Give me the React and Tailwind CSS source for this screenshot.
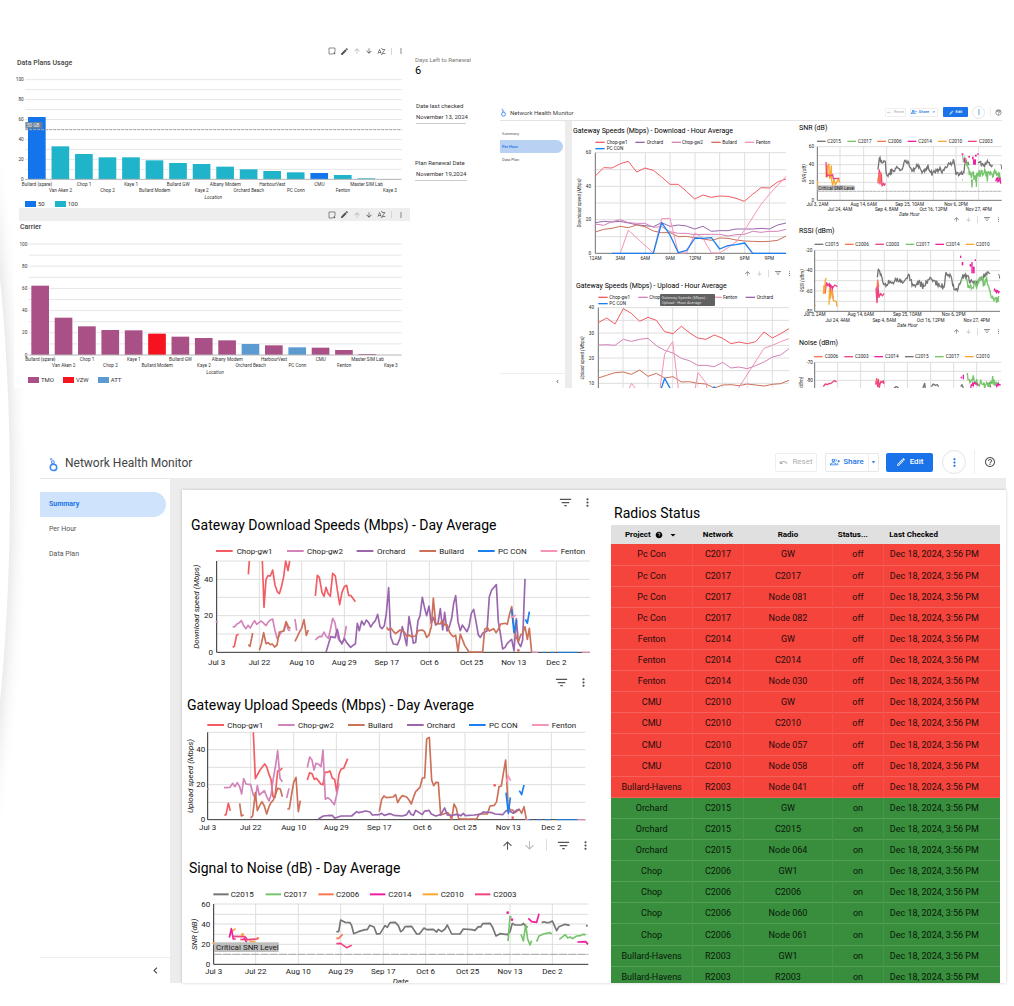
import React from "react";
import {
  MdArrowDownward,
  MdArrowDropDown,
  MdArrowUpward,
  MdChevronLeft,
  MdEdit,
  MdFilterList,
  MdHelp,
  MdHelpOutline,
  MdMoreVert,
  MdOutlineEdit,
  MdOutlineGroupAdd,
  MdSortByAlpha,
  MdUndo,
} from "react-icons/md";

const C = {
  gw1: "#f25c62",
  gw2: "#d283b9",
  orchard: "#9a66ae",
  bullard: "#cc7058",
  pc: "#1a80ef",
  fenton: "#f593b8",
  c2015: "#757575",
  c2017: "#76c46c",
  c2006: "#fa7650",
  c2014: "#ee1fa0",
  c2010: "#fba830",
  c2003: "#ee4480",
};

/* ---------- line chart primitives ---------- */

const toPoints = (pts) => pts.map((p) => p.join(",")).join(" ");

// Splits "x,y x,y | x,y x,y" into separate strokes.
function Strokes({ d, color, width = 5 }) {
  return d.split("|").map((part, i) => (
    <polyline key={i} points={part.trim()} fill="none" stroke={color} strokeWidth={width} strokeLinejoin="round" />
  ));
}

function Dots({ at, color, r = 4 }) {
  return at.map(([x, y]) => <circle key={x + "-" + y} cx={x} cy={y} r={r} fill={color} />);
}

// Hourly values: a polyline through anchors, with repeatable noise around it.
function noisy(anchors, amp, seed, step = 2) {
  let s = seed;
  const rnd = () => {
    s = (s * 16807) % 2147483647;
    return s / 2147483647 - 0.5;
  };
  rnd();
  rnd();
  const out = [];
  for (let i = 0; i < anchors.length - 1; i++) {
    const [x0, y0] = anchors[i];
    const [x1, y1] = anchors[i + 1];
    for (let x = x0; x < x1; x += step) {
      const t = (x - x0) / (x1 - x0);
      const spike = rnd() > 0.3 ? 2.4 : 1.1;
      out.push([Math.round(x), Math.round(y0 + (y1 - y0) * t + rnd() * amp * spike)]);
    }
  }
  return out;
}

function Noise({ a, amp, seed, color, width = 4 }) {
  return <polyline points={toPoints(noisy(a, amp, seed))} fill="none" stroke={color} strokeWidth={width} />;
}

function hourly(x0, step, values) {
  return values.map((v, i) => `${Math.round(x0 + i * step)},${v}`).join(" ");
}

function Plot({ box, x, y, xs, ys, yLabels, xLabels, legend, legendY, size, dash, gap, yTitle, label, children }) {
  return (
    <svg viewBox={box} className="block h-auto w-full font-[Roboto,sans-serif]" role="img" aria-label={label}>
      {ys.map((v) => (
        <line key={v} x1={x[0]} x2={x[1]} y1={v} y2={v} stroke="#dedede" strokeWidth="3" />
      ))}
      {xs.map((v) => (
        <line key={v} x1={v} x2={v} y1={y[0]} y2={y[1]} stroke="#dedede" strokeWidth="3" />
      ))}
      <path d={`M${x[0]} ${y[0]}V${y[1]}H${x[1]}`} fill="none" stroke={size > 20 ? "#333" : "#777"} strokeWidth="3" />
      {children}
      <g fill="#222" fontSize={size} dominantBaseline="central">
        {yLabels.map(([t, v]) => (
          <text key={t} x={x[0] - gap} y={v} textAnchor="end">{t}</text>
        ))}
        {xLabels.map(([t, lx, ly]) => (
          <text key={t} x={lx} y={ly} textAnchor="middle" fontStyle={t.startsWith("Date") ? "italic" : "normal"}>{t}</text>
        ))}
        {legend.map(([t, c, lx, tx, ly]) => (
          <g key={t}>
            <line x1={lx} x2={lx + dash} y1={ly || legendY} y2={ly || legendY} stroke={c} strokeWidth={size > 20 ? 6 : 4} />
            <text x={tx} y={ly || legendY}>{t}</text>
          </g>
        ))}
        <text
          transform={`translate(${yTitle[1]} ${yTitle[2]}) rotate(-90)`}
          textAnchor="middle"
          fontStyle="italic"
        >
          {yTitle[0]}
        </text>
      </g>
    </svg>
  );
}

const days = ["Jul 3", "Jul 22", "Aug 10", "Aug 29", "Sep 17", "Oct 6", "Oct 25", "Nov 13", "Dec 2"];
const hours = ["12AM", "3AM", "6AM", "9AM", "12PM", "3PM", "6PM", "9PM"];
const stamps = ["Jul 3, 2AM", "Jul 24, 4AM", "Aug 14, 6AM", "Sep 4, 8AM", "Sep 25, 10AM", "Oct 16, 12PM", "Nov 6, 2PM", "Nov 27, 4PM"];

const place = (names, xs, ly) => names.map((n, i) => [n, xs[i], ly]);
const stagger = (names, xs, a, b) => names.map((n, i) => [n, xs[i], i % 2 ? b : a]);

/* ---------- day charts ---------- */

function DownloadDay() {
  const xs = [140, 268, 395, 523, 650, 778, 905, 1031, 1159];
  return (
    <Plot
      label="Gateway download speeds by day"
      box="36 198 1269 372" x={[140, 1260]} y={[243, 517]} xs={xs} ys={[243, 298, 352, 407, 462]}
      yLabels={[["40", 298], ["20", 407], ["0", 517]]} xLabels={place(days, xs, 546)} size={24} dash={50} gap={11}
      legendY={213} yTitle={["Download speed (Mbps)", 80, 380]}
      legend={[
        ["Chop-gw1", C.gw1, 138, 200], ["Chop-gw2", C.gw2, 351, 411], ["Orchard", C.orchard, 560, 621],
        ["Bullard", C.bullard, 748, 808], ["PC CON", C.pc, 924, 984], ["Fenton", C.fenton, 1112, 1172],
      ]}
    >
      <Strokes color={C.gw1} d="235,283 238,243 | 277,243 282,382 288,298 294,287 301,288 308,270 315,315 322,335 328,341 334,322 341,290 347,243 354,272 359,243 | 436,348 442,286 448,292 456,337 462,349 468,322 474,340 481,349 488,280 496,288 502,330 509,374 516,337 523,320 530,316 536,346 543,347 556,365 | 188,502 193,499 200,465 206,463" />
      <Strokes color={C.gw2} d="137,425 143,425 | 188,441 194,440 201,432 208,428 214,422 221,437 228,446 234,436 241,444 248,430 254,422 260,433 267,428 274,423 288,437 294,427 301,420 308,417 315,452 322,477 328,466 335,455 342,452 349,428 355,450 361,452 | 375,417 380,452 | 436,480 442,474 449,469 455,470 462,456 468,468 475,475 481,450 488,415 495,428 502,470 509,483 516,488 522,478 529,438" />
      <Strokes color={C.orchard} d="468,517 482,470 495,473 502,448 509,480 516,492 523,475 530,488 542,502 549,496 556,492 562,430 568,452 575,423 582,435 589,420 596,428 602,441 609,430 616,422 623,403 630,440 636,446 643,437 649,400 656,323 662,470 670,492 682,494 690,475 697,440 703,465 710,497 717,410 724,450 730,490 737,487 744,422 750,408 757,352 764,385 770,407 777,378 784,430 790,412 797,435 804,430 811,386 818,450 824,397 831,453 838,440 845,415 851,370 857,347 864,425 871,452 877,435 891,455 897,440 904,400 911,388 918,425 925,465 931,472 938,460 951,453 958,350 965,330 979,314 985,425 991,460 998,507 1005,502 1012,490 1025,478 1032,512 1039,416 1045,488 1052,500 1058,480 1065,296" />
      <Strokes color={C.bullard} d="235,494 240,499 248,459 | 268,511 274,492 281,458 288,491 294,488 301,494 307,492 314,501 321,495 328,456 341,453 348,425 355,440 361,446 | 375,484 382,470 389,455 395,445 402,419 409,466 415,450 | 650,442 656,450 663,445 670,454 677,461 690,450 697,452 704,458 711,470 717,465 724,470 737,468 744,452 757,450 763,454 770,472 777,465 784,440 790,354 797,430 810,432 817,422 824,435 831,434 838,455 845,465 850,470 857,466 864,515 871,462 878,480 884,496 897,516 938,516 944,448 952,442 958,453 971,446 978,458 985,448 992,432 1005,430 1012,433 1018,405 1025,380 1032,440 1038,470 1045,486 1052,465 1058,460 1065,440 1072,478 1078,445 1085,517" />
      <Strokes color={C.pc} d="1025,388 1032,458 1040,420 | 1066,418 1072,430 1078,395" />
      <Strokes width={3} color={C.pc} d="1090,517 1098,517 | 1118,517 1126,517 | 1142,517 1152,517 | 1164,517 1222,517" />
      <Strokes color={C.fenton} d="1022,412 1030,410 1038,405" />
      <Strokes width={3} color={C.fenton} d="1085,517 1104,517 | 1236,517 1260,517" />
      <Dots color={C.gw1} at={[[1045, 511]]} />
    </Plot>
  );
}

function UploadDay() {
  const xs = [113, 242, 371, 499, 628, 757, 885, 1015, 1144];
  return (
    <Plot
      label="Gateway upload speeds by day"
      box="36 150 1269 339" x={[113, 1246]} y={[187, 449]} xs={xs} ys={[187, 239, 292, 344, 397]}
      yLabels={[["40", 239], ["20", 344], ["0", 449]]} xLabels={place(days, xs, 471)} size={24} dash={50} gap={7}
      legendY={165} yTitle={["Upload speed (Mbps)", 62, 318]}
      legend={[
        ["Chop-gw1", C.gw1, 112, 172], ["Chop-gw2", C.gw2, 324, 384], ["Bullard", C.bullard, 534, 594],
        ["Orchard", C.orchard, 711, 770], ["PC CON", C.pc, 897, 957], ["Fenton", C.fenton, 1086, 1145],
      ]}
    >
      <Strokes color={C.gw1} d="163,436 168,434 175,400 181,422 | 250,187 256,326 270,300 284,282 290,290 296,310 303,328 309,380 315,382 323,303 331,300 337,294 | 412,330 419,308 426,311 433,328 439,325 446,333 452,342 459,344 465,306 473,307 480,303 487,325 494,328 500,365 507,312 513,298 521,295 533,266" />
      <Strokes color={C.gw2} d="111,357 117,357 | 162,353 180,352 188,340 195,350 202,338 209,350 215,372 221,326 228,342 242,344 250,375 256,385 262,347 268,375 283,362 290,380 297,393 303,375 310,325 317,285 323,242 330,325 337,335 | 350,384 357,355 | 412,293 419,261 426,270 432,300 438,280 446,283 453,290 459,240 466,388 473,383 480,388 493,404 500,375 507,340" />
      <Strokes color={C.bullard} d="209,400 214,438 221,434 | 242,444 248,438 256,368 262,422 270,405 276,395 283,408 290,432 297,410 303,398 310,390 316,375 323,355 331,357 337,380 | 352,418 358,416 365,372 371,337 378,322 385,425 391,392 | 628,425 635,388 642,378 649,383 669,381 677,374 683,398 690,385 697,377 710,381 717,390 724,402 731,380 737,365 750,352 757,324 764,324 770,207 778,202 785,330 791,347 798,337 805,338 812,435 820,432 833,428 840,436 845,448 852,402 859,415 866,446 873,447 920,447 927,432 952,432 960,408 973,406 980,395 987,350 994,348 1000,310 1007,270 1014,405 1021,420 1028,420 1035,428 1048,418 1055,430 1062,410 1069,448" />
      <Strokes color={C.orchard} d="445,447 460,438 480,436 488,437 494,445 513,438 545,438 560,425 567,428 587,423 600,426 607,435 627,434 635,430 643,436 660,431 672,436 697,438 710,434 717,422 723,433 730,436 737,421 757,434 763,424 777,421 784,432 797,438 812,434 824,414 832,435 845,436 860,433 873,437 880,430 886,437 912,435 930,433 940,426 966,428 975,432 998,434 1008,422 1020,424 1030,430 1040,420 1048,418" />
      <Strokes color={C.pc} d="1008,368 1015,430 1021,382 | 1048,362 1055,374 1062,345" />
      <Strokes width={3} color={C.pc} d="1076,449 1084,449 | 1102,449 1112,449 | 1126,449 1140,449 | 1158,449 1222,449" />
      <Strokes color={C.fenton} d="1009,337 1014,317 1022,332" />
      <Strokes width={3} color={C.fenton} d="1066,449 1076,449 | 1222,449 1246,449" />
      <Dots color={C.gw1} at={[[974, 346], [1028, 443]]} />
    </Plot>
  );
}

function SignalDay() {
  const xs = [131, 257, 385, 512, 640, 767, 893, 1020, 1147];
  return (
    <Plot
      label="Signal to noise by day"
      box="36 165 1269 279" x={[131, 1255]} y={[207, 388]} xs={xs} ys={[207, 238, 267, 298, 328, 358]}
      yLabels={[["60", 207], ["40", 267], ["20", 328], ["0", 388]]}
      xLabels={[...place(days, xs, 409), ["Date", 692, 440]]} size={24} dash={46} gap={10}
      legendY={178} yTitle={["SNR (dB)", 74, 298]}
      legend={[
        ["C2015", C.c2015, 130, 182], ["C2017", C.c2017, 287, 341], ["C2006", C.c2006, 445, 498],
        ["C2014", C.c2014, 600, 655], ["C2010", C.c2010, 758, 812], ["C2003", C.c2003, 915, 970],
      ]}
    >
      <line x1="131" x2="1255" y1="358" y2="358" stroke="#a8a8a8" strokeWidth="3" strokeDasharray="24 4" />
      <Strokes color={C.c2015} d="499,290 506,290 512,255 525,262 540,263 545,272 551,296 565,290 585,284 592,284 599,271 612,276 620,297 630,296 645,272 652,277 660,263 676,262 685,272 692,290 698,286 705,275 725,274 740,297 748,297 762,279 770,284 790,283 800,291 805,283 815,290 825,282 832,270 845,297 870,297 880,282 905,284 915,286 925,275 932,276 938,266 960,265 967,275 978,303 990,296 1012,299 1020,290 1027,265 1035,270 1055,270 1060,265 1065,272 1073,277 | 1115,263 1122,260 1130,263 1140,262 1147,258 1160,287 1167,275 1185,268 1199,271 | 1248,271 1253,274" />
      <Strokes color={C.c2017} d="1014,318 1020,245 1025,246 | 1053,298 1060,318 1067,269 1073,312 1080,330 1085,317 | 1100,320 1107,303 1120,297 1140,293 1145,297 | 1168,313 1186,299 1193,309 1200,306 1208,311 1220,303 1232,302 1238,298 1247,299" />
      <Strokes color={C.c2006} d="499,310 506,310 518,298" />
      <Strokes color={C.c2010} d="179,304 184,290 197,281 | 214,298 219,303 | 238,319 256,320" />
      <Strokes color={C.c2014} d="178,308 184,281 190,312 197,312 | 222,308 230,322 | 1075,250 1085,260 1100,262 1107,236 | 1222,321 1247,320 1254,328" />
      <Strokes color={C.c2003} d="190,304 225,305 232,314 262,312 | 211,313 232,314 | 499,326 512,325 520,331 530,338 545,331" />
      <Dots color={C.c2014} at={[[1013, 233], [1026, 254]]} />
      <Dots color={C.c2006} at={[[263, 310]]} />
      <Dots color={C.c2010} at={[[218, 298], [131, 325]]} />
      <rect x="132" y="322" width="194" height="29" fill="#bdbdbd" />
      <text x="138" y="337" fontSize="24" fill="#222" dominantBaseline="central">Critical SNR Level</text>
    </Plot>
  );
}

/* ---------- hour charts ---------- */

function DownloadHour() {
  const xs = [316, 391, 466, 540, 615, 689, 764, 838];
  return (
    <Plot
      label="Gateway download speeds by hour"
      box="246 129 675 372" x={[316, 888]} y={[173, 475]} xs={xs} ys={[173, 224, 274, 324, 374, 425]}
      yLabels={[["60", 173], ["40", 274], ["20", 374], ["0", 475]]} xLabels={place(hours, xs, 489)} size={14} dash={28} gap={13}
      legendY={142} yTitle={["Download speed (Mbps)", 267, 324]}
      legend={[
        ["Chop-gw1", C.gw1, 316, 350], ["Orchard", C.orchard, 436, 470], ["Chop-gw2", C.gw2, 545, 576],
        ["Bullard", C.bullard, 664, 697], ["Fenton", C.fenton, 764, 798], ["PC CON", C.pc, 316, 350, 161],
      ]}
    >
      <Strokes width={3} color={C.gw1} d={hourly(316, 24.85, [243, 218, 219, 206, 199, 231, 219, 226, 246, 268, 268, 289, 312, 300, 307, 303, 304, 310, 319, 298, 278, 279, 261, 252])} />
      <Strokes width={3} color={C.orchard} d={hourly(316, 24.85, [383, 379, 381, 379, 384, 389, 392, 395, 383, 394, 390, 393, 402, 394, 409, 407, 407, 402, 402, 402, 400, 402, 390, 384])} />
      <Strokes width={3} color={C.gw2} d={hourly(316, 24.85, [387, 391, 380, 374, 383, 385, 385, 397, 395, 410, 415, 415, 419, 418, 418, 418, 423, 419, 418, 409, 412, 409, 409, 403])} />
      <Strokes width={3} color={C.bullard} d={hourly(316, 24.85, [411, 403, 400, 394, 398, 390, 395, 408, 413, 413, 425, 424, 428, 432, 436, 429, 430, 435, 438, 439, 440, 439, 436, 423])} />
      <Strokes width={3} color={C.fenton} d="391,474 415,406 490,474 515,371 540,370 565,474 590,474 615,414 639,430 664,474 689,474 714,458 738,441 764,405 813,328 838,298 888,244" />
      <Strokes width={4} color={C.pc} d="365,475 490,475 515,383 540,420 565,473 590,466 615,429 639,430 664,428 689,462 714,452 738,449 764,444 788,475 888,475" />
    </Plot>
  );
}

function UploadHour() {
  const xs = [115, 189, 264, 338, 413, 487, 562, 637];
  return (
    <Plot
      label="Gateway upload speeds by hour"
      box="36 117 675 282" x={[115, 687]} y={[158, 460]} xs={xs} ys={[158, 196, 234, 271, 309, 347, 385]}
      yLabels={[["40", 158], ["30", 234], ["20", 309], ["10", 385]]} xLabels={[]} size={14} dash={28} gap={13}
      legendY={127} yTitle={["Upload speed (Mbps)", 67, 309]}
      legend={[
        ["Chop-gw1", C.gw1, 115, 148], ["Chop-gw2", C.gw2, 235, 268], ["Fenton", C.fenton, 457, 489],
        ["Orchard", C.orchard, 557, 590], ["PC CON", C.pc, 115, 148, 146],
      ]}
    >
      <Strokes width={3} color={C.gw1} d={hourly(115, 24.85, [203, 189, 207, 161, 175, 199, 187, 196, 230, 236, 214, 233, 249, 253, 240, 250, 266, 261, 266, 260, 231, 249, 236, 221])} />
      <Strokes width={3} color={C.gw2} d={hourly(115, 24.85, [270, 269, 271, 253, 259, 253, 250, 272, 286, 294, 310, 317, 331, 331, 335, 322, 339, 336, 341, 332, 321, 306, 300, 281])} />
      <Strokes width={3} color={C.bullard} d={hourly(115, 24.85, [369, 361, 353, 351, 358, 345, 364, 355, 369, 365, 381, 380, 385, 387, 399, 390, 389, 392, 387, 390, 393, 388, 386, 376])} />
      <Strokes width={3} color={C.fenton} d="206,403 215,385 228,403 | 300,400 314,297 338,260 355,400 | 405,403 414,353 437,382 442,403 | 535,400 562,358 612,280 637,271 662,260 687,251" />
      <Strokes width={4} color={C.pc} d="304,400 314,370 332,403 | 456,402 463,396 470,402" />
    </Plot>
  );
}

const blob = (x, y, h, w = 5) => <rect key={x + "-" + y} x={x} y={y} width={w} height={h} fill={C.c2014} />;

function SnrHour() {
  const xs = [82, 150, 221, 290, 359, 430, 498, 566];
  return (
    <Plot
      label="SNR by hour"
      box="21 114 615 234" x={[82, 635]} y={[140, 301]} xs={xs} ys={[140, 167, 194, 220, 247, 274]}
      yLabels={[["60", 140], ["40", 194], ["20", 247], ["0", 301]]}
      xLabels={[...stagger(stamps, xs, 312, 328), ["Date Hour", 358, 342]]} size={14} dash={26} gap={10}
      legendY={124} yTitle={["SNR (dB)", 42, 220]}
      legend={[
        ["C2015", C.c2015, 81, 112], ["C2017", C.c2017, 172, 204], ["C2006", C.c2006, 262, 294],
        ["C2014", C.c2014, 353, 385], ["C2010", C.c2010, 444, 476], ["C2003", C.c2003, 534, 567],
      ]}
    >
      <line x1="82" x2="635" y1="274" y2="274" stroke="#a8a8a8" strokeWidth="2" strokeDasharray="9 3" />
      <Strokes width={4} color={C.c2010} d="83,244 83,254 | 108,232 110,200 112,230 113,197 117,192 118,228 120,236 124,198 125,240 128,258 132,236 136,255 146,236 149,248" />
      <Strokes width={4} color={C.c2003} d="108,186 110,230 113,224 120,228 128,224 130,236 148,235 | 264,250 268,210 270,252 274,222 276,258 280,250 283,256 286,250" />
      <Strokes width={4} color={C.c2006} d="264,234 266,245 268,222 270,248 272,215" />
      <Noise color={C.c2015} seed={7100} amp={11} a={[[264, 210], [268, 170], [276, 185], [286, 188], [290, 226], [306, 214], [320, 206], [334, 213], [346, 182], [356, 188], [362, 212], [374, 208], [384, 194], [396, 215], [404, 210], [414, 200], [426, 222], [440, 210], [456, 214], [466, 205], [478, 192], [492, 188], [498, 222], [512, 224], [522, 212], [526, 182], [540, 195]]} />
      <Noise color={C.c2015} seed={8123} amp={10} a={[[564, 186], [574, 188], [584, 194], [592, 184], [604, 200], [610, 195]]} />
      <Strokes width={3} color={C.c2015} d="631,194 634,196 635,208" />
      <Noise color={C.c2017} seed={2901} amp={22} a={[[522, 180], [530, 186], [538, 215], [546, 236], [554, 235], [562, 220], [574, 222], [590, 218], [608, 225], [632, 228]]} />
      <Strokes width={3} color={C.c2017} d="516,240 519,240 | 518,168 520,186 | 544,238 546,262 548,238 | 558,230 559,260 561,228" />
      <Noise color={C.c2014} seed={1301} amp={10} a={[[616, 238], [634, 240]]} />
      {[blob(515, 160, 6), blob(521, 174, 14), blob(535, 168, 5), blob(546, 170, 8), blob(549, 178, 16, 9), blob(555, 164, 6), blob(562, 160, 5, 4)]}
      <rect x="82" y="256" width="110" height="15" fill="#bdbdbd" />
      <text x="85" y="264" fontSize="14" fill="#222" dominantBaseline="central">Critical SNR Level</text>
    </Plot>
  );
}

function RssiHour() {
  const xs = [74, 143, 212, 283, 352, 422, 491, 560];
  return (
    <Plot
      label="RSSI by hour"
      box="21 3 615 261" x={[74, 630]} y={[31, 214]} xs={xs} ys={[31, 61, 92, 122, 153, 184]}
      yLabels={[["-20", 31], ["-40", 92], ["-60", 153], ["-80", 214]]}
      xLabels={[...stagger(stamps, xs, 224, 241), ["Date Hour", 352, 257]]} size={14} dash={26} gap={7}
      legendY={13} yTitle={["RSSI (dBm)", 37, 122]}
      legend={[
        ["C2015", C.c2015, 74, 105], ["C2006", C.c2006, 165, 196], ["C2003", C.c2003, 256, 287],
        ["C2017", C.c2017, 347, 378], ["C2014", C.c2014, 436, 468], ["C2010", C.c2010, 527, 558],
      ]}
    >
      <Strokes width={4} color={C.c2003} d="104,150 107,136 110,128 114,138 118,130 121,160 123,136 128,144 134,135 142,140" />
      <Strokes width={3} color={C.c2014} d="106,160 109,130 | 118,158 120,132 124,158 | 127,138 129,176" />
      <Strokes width={4} color={C.c2010} d="74,196 77,196 | 100,162 102,136 104,160 106,120 109,114 | 117,194 119,142 121,176 126,150 130,182 136,184 139,184 141,200" />
      <Noise color={C.c2015} seed={3701} amp={11} a={[[262, 112], [265, 88], [274, 106], [282, 138], [296, 130], [310, 132], [322, 118], [336, 125], [350, 112], [358, 102], [368, 134], [378, 138], [388, 125], [400, 136], [412, 126], [424, 116], [434, 128], [446, 135], [462, 140], [468, 100], [482, 106], [492, 146], [504, 148], [514, 114], [528, 108], [544, 120], [556, 132], [566, 120], [578, 112], [588, 106], [594, 94], [602, 100]]} />
      <Strokes width={4} color={C.c2006} d="259,140 261,150 263,120 266,140" />
      <Strokes width={4} color={C.c2003} d="258,145 261,188 264,140 267,172 272,160 277,168 282,160" />
      <Strokes width={3} color={C.c2015} d="625,102 628,106 629,116" />
      <Noise color={C.c2017} seed={5301} amp={16} a={[[512, 122], [518, 112]]} />
      <Noise color={C.c2017} seed={5307} amp={18} a={[[530, 134], [538, 142], [550, 138], [562, 125], [572, 118], [588, 122], [600, 150], [606, 174], [618, 170], [628, 168]]} />
      <Noise color={C.c2014} seed={9701} amp={10} a={[[612, 152], [630, 154]]} />
      {[blob(510, 47, 7, 4), blob(515, 66, 10), blob(539, 72, 8), blob(544, 66, 34, 4), blob(548, 80, 20, 6), blob(554, 58, 5, 4)]}
    </Plot>
  );
}

function NoiseHour() {
  const xs = [74, 143, 212, 283, 352, 422, 491, 560];
  return (
    <Plot
      label="Noise by hour"
      box="21 339 615 105" x={[74, 634]} y={[367, 500]} xs={xs} ys={[367, 394, 421]}
      yLabels={[["-70", 367], ["-80", 421]]} xLabels={[]} size={14} dash={26} gap={5}
      legendY={350} yTitle={["Noise (dBm)", 34, 448]}
      legend={[
        ["C2006", C.c2006, 72, 104], ["C2003", C.c2003, 163, 195], ["C2014", C.c2014, 253, 285],
        ["C2015", C.c2015, 345, 375], ["C2017", C.c2017, 435, 467], ["C2010", C.c2010, 525, 558],
      ]}
    >
      <Strokes width={4} color={C.c2003} d="100,440 106,432 112,434 118,430 122,431 128,426 134,422 140,426 | 257,434 260,416 263,440 265,418 268,442 272,424 276,428 280,422 282,432" />
      <Strokes width={3} color={C.c2006} d="258,428 260,418 264,424" />
      <Strokes width={4} color={C.c2015} d="312,444 318,440 326,443 | 398,446 404,430 406,446 | 424,440 430,432 436,436 442,434 446,440 | 512,440 516,434 520,444 | 594,440 598,428 602,442" />
      <Noise color={C.c2017} seed={6101} amp={16} a={[[532, 410], [540, 420], [548, 412], [560, 430], [574, 430], [590, 434], [606, 426], [628, 434]]} />
      <Noise color={C.c2014} seed={1101} amp={5} a={[[542, 438], [558, 430], [566, 440]]} />
      <Noise color={C.c2014} seed={2301} amp={5} a={[[618, 436], [634, 432]]} />
      {[blob(512, 410, 5, 4), blob(518, 404, 14, 4)]}
    </Plot>
  );
}

/* ---------- bar charts ---------- */

const sites = ["Bullard (spare)", "Van Aken 2", "Chop 1", "Chop 2", "Kaye 1", "Bullard Modem", "Bullard GW", "Kaye 2", "Albany Modem", "Orchard Beach", "HarbourVest", "PC Conn", "CMU", "Fenton", "Master SIM Lab", "Kaye 3"];

function Bars({ label, box, x0, first, pitch, base, step, tops, fill, rows, location, children }) {
  return (
    <svg viewBox={box} className="block h-auto w-full font-[Roboto,sans-serif]" role="img" aria-label={label}>
      {[1, 2, 3, 4, 5, 6, 7, 8, 9, 10].map((i) => (
        <line key={i} x1={x0} x2="1205" y1={base - i * step} y2={base - i * step} stroke="#e6e6e6" strokeWidth="3" />
      ))}
      {tops.map((t, i) => (
        <rect key={sites[i]} x={first + i * pitch} y={t} width="53" height={base - t} fill={fill(i)} />
      ))}
      <line x1={x0} x2="1205" y1={base} y2={base} stroke="#b5b5b5" strokeWidth="3" />
      {children}
      <g fill="#333" fontSize="14" dominantBaseline="central">
        {[0, 20, 40, 60, 80, 100].map((v) => (
          <text key={v} x={x0 - 4} y={base - (v / 10) * step} textAnchor="end">{v}</text>
        ))}
        {sites.map((s, i) => (
          <text key={s} x={first + 27 + i * pitch} y={rows[i % 2]} textAnchor="middle">{s}</text>
        ))}
        <text x={location[0]} y={location[1]} textAnchor="middle" fontStyle="italic">Location</text>
      </g>
    </svg>
  );
}

function UsageBars() {
  return (
    <Bars
      label="Data plans usage" box="42 102 1188 393" x0={75} first={84} pitch={70.6} base={433} step={29.9}
      tops={[246, 334, 357, 367, 367, 376, 384, 387, 395, 403, 408, 412, 414, 420, 430, 432]}
      fill={(i) => (i === 0 || i === 12 ? "#1474ec" : "#20b4cb")} rows={[447, 466]} location={[640, 486]}
    >
      <line x1="75" x2="1205" y1="284" y2="284" stroke="#a9a9a9" strokeWidth="3" strokeDasharray="9 3" />
      <rect x="76" y="261" width="51" height="20" fill="#6f8293" fillOpacity="0.9" />
      <text x="81" y="271" fontSize="14" fill="#f0f0f0" dominantBaseline="central">50 GB</text>
    </Bars>
  );
}

function CarrierBars() {
  return (
    <Bars
      label="Usage by carrier" box="42 99 1188 426" x0={86} first={94} pitch={70.1} base={465} step={33.3}
      tops={[257, 353, 379, 390, 391, 401, 410, 414, 421, 432, 436, 442, 443, 450, 462, 465]}
      fill={(i) => (i === 5 ? "#f6121f" : i === 9 || i === 11 ? "#5b9bd2" : "#a95186")} rows={[478, 497]} location={[645, 518]}
    />
  );
}

function Swatches({ items, className }) {
  return (
    <ul className={`flex items-center text-[6px] leading-[8px] text-[#333] ${className}`}>
      {items.map(([t, bg]) => (
        <li key={t} className="flex items-center gap-[2px]">
          <span className={`h-[6px] w-[11px] ${bg}`} />
          {t}
        </li>
      ))}
    </ul>
  );
}

/* ---------- toolbars ---------- */

function IconButton({ label, className = "", children }) {
  return (
    <button type="button" aria-label={label} className={`flex shrink-0 items-center justify-center ${className}`}>
      {children}
    </button>
  );
}

function ObjectTools({ className }) {
  return (
    <div className={`flex items-center justify-end gap-[4px] pr-[5px] text-[#555] ${className}`}>
      <IconButton label="Select">
        <svg viewBox="0 0 24 24" className="size-[8px]" fill="none" stroke="currentColor" strokeWidth="2">
          <path d="M15 21H3V3h18v12" />
          <circle cx="19" cy="19" r="3" fill="currentColor" stroke="none" />
        </svg>
      </IconButton>
      <IconButton label="Edit chart"><MdEdit className="size-[9px]" /></IconButton>
      <IconButton label="Drill up" className="text-[#b5b5b5]"><MdArrowUpward className="size-[8px]" /></IconButton>
      <IconButton label="Drill down"><MdArrowDownward className="size-[8px]" /></IconButton>
      <IconButton label="Sort"><MdSortByAlpha className="size-[9px]" /></IconButton>
      <span className="mx-px h-[7px] w-px bg-[#d5d5d5]" />
      <IconButton label="More"><MdMoreVert className="size-[8px]" /></IconButton>
    </div>
  );
}

function ChartTools({ drill, className = "" }) {
  return (
    <div className={`flex items-center justify-end text-[#555] ${className}`}>
      {drill && (
        <>
          <IconButton label="Drill up"><MdArrowUpward className="size-[13px]" /></IconButton>
          <IconButton label="Drill down" className="ml-[9px] text-[#bbb]"><MdArrowDownward className="size-[13px]" /></IconButton>
          <span className="mr-[9px] ml-[10px] h-3 w-px bg-[#ddd]" />
        </>
      )}
      <IconButton label="Filter"><MdFilterList className="size-[15px]" /></IconButton>
      <IconButton label="More" className="ml-2"><MdMoreVert className="size-[13px]" /></IconButton>
    </div>
  );
}

function SmallTools({ className = "" }) {
  return (
    <div className={`flex items-center justify-end text-[#666] ${className}`}>
      <IconButton label="Drill up"><MdArrowUpward className="size-[7px]" /></IconButton>
      <IconButton label="Drill down" className="ml-[5px] text-[#bbb]"><MdArrowDownward className="size-[7px]" /></IconButton>
      <span className="mx-[5px] h-[7px] w-px bg-[#ddd]" />
      <IconButton label="Filter"><MdFilterList className="size-[8px]" /></IconButton>
      <IconButton label="More" className="ml-[4px]"><MdMoreVert className="size-[7px]" /></IconButton>
    </div>
  );
}

function Logo({ className }) {
  return (
    <svg viewBox="0 0 18 26" className={className} fill="none" stroke="#3f86f0" aria-hidden="true">
      <circle cx="5" cy="4" r="1.4" strokeWidth="1.4" />
      <circle cx="8" cy="9" r="2.4" strokeWidth="1.8" />
      <circle cx="9" cy="18" r="5.6" strokeWidth="2.6" />
    </svg>
  );
}

/* ---------- sections ---------- */

function PlanReport() {
  return (
    <section className="relative bg-white pb-1">
      <ObjectTools className="h-3" />
      <h2 className="pl-[3px] text-[7px] leading-[12px] font-medium text-[#444]">Data Plans Usage</h2>
      <UsageBars />
      <Swatches className="h-2 gap-[10px] pl-[11px]" items={[["50", "bg-[#1474ec]"], ["100", "bg-[#20b4cb]"]]} />
      <ObjectTools className="ml-[5px] h-[13px] bg-[#eeeeee]" />
      <h2 className="pl-[6px] text-[7px] leading-[12px] font-medium text-[#444]">Carrier</h2>
      <CarrierBars />
      <Swatches
        className="h-[9px] gap-[9px] pl-[14px]"
        items={[["TMO", "bg-[#a95186]"], ["VZW", "bg-[#f6121f]"], ["ATT", "bg-[#5b9bd2]"]]}
      />
    </section>
  );
}

function PlanDates() {
  return (
    <dl className="pt-[11px] pl-[5px] text-[6px] leading-[8px] whitespace-nowrap text-[#333]">
      <dt className="text-[#777]">Days Left to Renewal</dt>
      <dd className="text-[11px] leading-[14px] text-black">6</dd>
      <dt className="mt-6 pl-px">Date last checked</dt>
      <dd className="mt-[3px] ml-px w-[50px] border-b border-[#ccc] pb-[2px]">November 13, 2024</dd>
      <dt className="mt-[35px]">Plan Renewal Date</dt>
      <dd className="mt-[3px] w-[52px] border-b border-[#ccc] pb-[2px] pl-px">November 19,2024</dd>
    </dl>
  );
}

const smallTitle = "text-[7px] leading-[10px] whitespace-nowrap text-black";

function HourDashboard() {
  return (
    <section className="mt-[59px] bg-white">
      <header className="flex h-[17px] items-center border-b border-[#e4e4e4]">
        <Logo className="h-[9px] w-[7px]" />
        <h2 className="ml-[3px] text-[6px] whitespace-nowrap text-[#444]">Network Health Monitor</h2>
        <div className="ml-auto flex items-center text-[4px] font-medium">
          <button type="button" disabled className="flex h-[9px] w-[21px] items-center justify-center gap-[2px] rounded-[1px] border border-[#f0f0f0] text-[#bbb]">
            <MdUndo className="size-[5px]" />Reset
          </button>
          <button type="button" className="ml-1 flex h-[9px] w-[28px] items-center justify-center gap-[2px] rounded-[1px] border border-[#ececec] text-[#1a73e8]">
            <MdOutlineGroupAdd className="size-[6px]" />Share<MdArrowDropDown className="size-[6px]" />
          </button>
          <button type="button" className="ml-[5px] flex h-[10px] w-[25px] items-center justify-center gap-[2px] rounded-[1px] bg-[#1a73e8] text-white">
            <MdOutlineEdit className="size-[5px]" />Edit
          </button>
          <IconButton label="More options" className="ml-1 size-[13px] rounded-full border border-[#e6e6e6] text-[#1a73e8]">
            <MdMoreVert className="size-[8px]" />
          </IconButton>
          <span className="mr-1 ml-[5px] h-[10px] w-px bg-[#eee]" />
          <IconButton label="Help" className="text-[#555]"><MdHelpOutline className="size-[7px]" /></IconButton>
        </div>
      </header>
      <div className="flex">
        <nav className="flex w-[65px] shrink-0 flex-col pt-[6px] text-[4px] text-[#555]">
          <a href="#summary" className="flex h-[13px] items-center pl-[2px]">Summary</a>
          <a href="#hour" className="mr-[2px] flex h-[13px] items-center rounded-r-full bg-[#b9d1f2] pl-[2px] font-medium text-[#1a73e8]">Per Hour</a>
          <a href="#plan" className="flex h-[13px] items-center pl-[2px]">Data Plan</a>
          <div className="mt-auto flex h-[15px] items-center justify-end border-t border-[#eee] pr-1 text-[#555]">
            <IconButton label="Collapse"><MdChevronLeft className="size-[7px]" /></IconButton>
          </div>
        </nav>
        <div className="grid min-w-0 flex-1 grid-cols-[225fr_205fr] border-l-[7px] border-[#ececec]">
          <div className="relative min-w-0 pt-[5px]">
            <h3 className={`mb-[2px] pl-px ${smallTitle}`}>Gateway Speeds (Mbps) - Download - Hour Average</h3>
            <DownloadHour />
            <SmallTools className="mt-[3px] h-4 pr-1" />
            <h3 className={`mb-[3px] pl-1 ${smallTitle}`}>Gateway Speeds (Mbps) - Upload - Hour Average</h3>
            <div className="relative">
              <UploadHour />
              <p role="tooltip" className="absolute top-0 left-[39%] w-[55px] rounded-[1px] bg-[#616161] px-[2px] py-[1px] text-[4px] leading-[5px] text-[#ddd]">
                Gateway Speeds (Mbps) - Upload - Hour Average
              </p>
            </div>
          </div>
          <div className="min-w-0 pt-[2px]">
            <h3 className={`mb-[5px] pl-[2px] ${smallTitle}`}>SNR (dB)</h3>
            <SnrHour />
            <SmallTools className="h-[6px]" />
            <h3 className={`mt-1 mb-[5px] pl-[2px] ${smallTitle}`}>RSSI (dBm)</h3>
            <RssiHour />
            <SmallTools className="h-[6px]" />
            <h3 className={`mt-1 mb-[5px] pl-[2px] ${smallTitle}`}>Noise (dBm)</h3>
            <NoiseHour />
          </div>
        </div>
      </div>
    </section>
  );
}

const radios = [
  ["Pc Con", "C2017", "GW", "off"], ["Pc Con", "C2017", "C2017", "off"], ["Pc Con", "C2017", "Node 081", "off"],
  ["Pc Con", "C2017", "Node 082", "off"], ["Fenton", "C2014", "GW", "off"], ["Fenton", "C2014", "C2014", "off"],
  ["Fenton", "C2014", "Node 030", "off"], ["CMU", "C2010", "GW", "off"], ["CMU", "C2010", "C2010", "off"],
  ["CMU", "C2010", "Node 057", "off"], ["CMU", "C2010", "Node 058", "off"], ["Bullard-Havens", "R2003", "Node 041", "off"],
  ["Orchard", "C2015", "GW", "on"], ["Orchard", "C2015", "C2015", "on"], ["Orchard", "C2015", "Node 064", "on"],
  ["Chop", "C2006", "GW1", "on"], ["Chop", "C2006", "C2006", "on"], ["Chop", "C2006", "Node 060", "on"],
  ["Chop", "C2006", "Node 061", "on"], ["Bullard-Havens", "R2003", "GW1", "on"], ["Bullard-Havens", "R2003", "R2003", "on"],
];

function RadioTable() {
  return (
    <table className="h-[463px] w-full table-fixed border-collapse text-center text-[9px] leading-[12px]">
      <colgroup>
        <col className="w-[21%]" />
        <col className="w-[13%]" />
        <col className="w-[23%]" />
        <col className="w-[13%]" />
        <col className="w-[30%]" />
      </colgroup>
      <thead>
        <tr className="h-[19px] bg-[#e0e0e0] text-[8px] text-black">
          <th className="font-bold">
            <span className="flex items-center justify-center gap-1">
              Project <MdHelp className="size-2" /> <MdArrowDropDown className="size-3" />
            </span>
          </th>
          <th className="font-bold">Network</th>
          <th className="font-bold">Radio</th>
          <th className="pl-[5px] text-left font-bold">Status...</th>
          <th className="pl-[6px] text-left font-bold">Last Checked</th>
        </tr>
      </thead>
      <tbody>
        {radios.map(([project, network, radio, status]) => (
          <tr
            key={project + radio}
            className={
              status === "off"
                ? "h-[21px] border-b border-[#f6625b] bg-[#f4443c] text-[#2a0b0a] [&>td+td]:border-l [&>td+td]:border-[#f5524b]"
                : "h-[21px] border-b border-[#55a058] bg-[#388e3c] text-[#08180a] [&>td+td]:border-l [&>td+td]:border-[#46964a]"
            }
          >
            <td>{project}</td>
            <td>{network}</td>
            <td>{radio}</td>
            <td>{status}</td>
            <td className="pl-[6px] text-left whitespace-nowrap">Dec 18, 2024, 3:56 PM</td>
          </tr>
        ))}
      </tbody>
    </table>
  );
}

const bigTitle = "text-[14px] leading-[22px] whitespace-nowrap text-black";

function SummaryDashboard() {
  return (
    <section className="relative mt-[62px] mr-2 ml-10 bg-white">
      <header className="flex h-7 items-center pr-[10px] pl-2">
        <Logo className="h-[15px] w-[11px]" />
        <h1 className="ml-[6px] pb-[2px] text-[12px] whitespace-nowrap text-[#444]">Network Health Monitor</h1>
        <div className="ml-auto flex items-center pb-1 text-[8px] font-medium">
          <button type="button" disabled className="flex h-[19px] w-[42px] items-center justify-center gap-1 rounded-[2px] border border-[#eeeeee] font-normal text-[#b0b0b0]">
            <MdUndo className="size-[9px]" />Reset
          </button>
          <div className="ml-2 flex h-[19px] rounded-[2px] border border-[#e8e8e8] text-[#1a73e8]">
            <button type="button" className="flex w-[42px] items-center justify-center gap-[3px]">
              <MdOutlineGroupAdd className="size-[10px]" />Share
            </button>
            <IconButton label="Share options" className="w-[10px] border-l border-[#eeeeee]"><MdArrowDropDown className="size-[10px]" /></IconButton>
          </div>
          <button type="button" className="ml-[7px] flex h-[19px] w-[47px] items-center justify-center gap-1 rounded-[2px] bg-[#1a73e8] text-white">
            <MdOutlineEdit className="size-[10px]" />Edit
          </button>
          <IconButton label="More options" className="ml-[9px] size-6 rounded-full border border-[#e4e4e4] text-[#1a73e8]">
            <MdMoreVert className="size-[13px]" />
          </IconButton>
          <span className="mr-[9px] ml-2 h-6 w-px bg-[#eee]" />
          <IconButton label="Help" className="text-[#555]"><MdHelpOutline className="size-[12px]" /></IconButton>
        </div>
      </header>
      <div className="flex">
        <nav className="flex w-[130px] shrink-0 flex-col border-t border-[#e8e8e8] pt-[13px] text-[7px] text-[#555]">
          <a href="#summary" className="mr-1 flex h-[25px] items-center rounded-r-full bg-[#cfe3fc] pl-[9px] font-bold text-[#1a73e8]">Summary</a>
          <a href="#hour" className="flex h-[25px] items-center pl-[9px]">Per Hour</a>
          <a href="#plan" className="flex h-[25px] items-center pl-[9px]">Data Plan</a>
          <div className="mt-auto flex h-[26px] items-center justify-end border-t border-[#eee] pr-2 text-[#444]">
            <IconButton label="Collapse"><MdChevronLeft className="size-[13px]" /></IconButton>
          </div>
        </nav>
        <div className="min-w-0 flex-1 bg-[#ececec] pt-3 pl-3">
          <div className="grid grid-cols-[423fr_401fr] bg-white shadow-[0_0_3px_rgba(0,0,0,0.2)]">
            <div className="min-w-0">
              <ChartTools className="h-6 pr-[11px]" />
              <h2 className={`mb-[10px] pl-[9px] ${bigTitle}`}>Gateway Download Speeds (Mbps) - Day Average</h2>
              <DownloadDay />
              <ChartTools className="h-6 pr-[15px]" />
              <h2 className={`mb-1 pl-[5px] ${bigTitle}`}>Gateway Upload Speeds (Mbps) - Day Average</h2>
              <UploadDay />
              <ChartTools drill className="h-6 pr-[13px]" />
              <h2 className={`mb-[11px] pl-[7px] ${bigTitle}`}>Signal to Noise (dB) - Day Average</h2>
              <SignalDay />
            </div>
            <div className="overflow-hidden pt-3 pr-[6px] pl-[6px] [contain:size]">
              <h2 className={`mb-px pl-[3px] ${bigTitle}`}>Radios Status</h2>
              <RadioTable />
            </div>
          </div>
        </div>
      </div>
    </section>
  );
}

export default function App() {
  return (
    <div className="relative min-h-screen overflow-hidden bg-white pb-[23px] font-[Roboto,sans-serif]">
      <div className="absolute -top-[110px] -left-[300px] h-[1200px] w-[310px] rounded-[50%] bg-white shadow-[0_0_18px_rgba(0,0,0,0.16)]" />
      <div className="grid grid-cols-[396fr_90fr_502fr] items-start pt-[45px] pr-3 pl-[14px]">
        <PlanReport />
        <PlanDates />
        <HourDashboard />
      </div>
      <SummaryDashboard />
    </div>
  );
}
